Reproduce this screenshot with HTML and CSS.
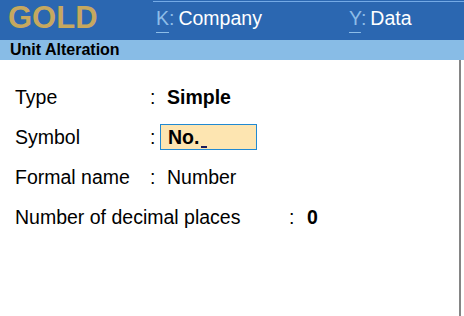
FILE: index.html
```html
<!DOCTYPE html>
<html lang="en">
  <head>
    <meta charset="UTF-8" />
    <meta name="viewport" content="width=device-width, initial-scale=1.0" />
    <title>Unit Alteration</title>
    <link rel="stylesheet" href="styles.css">
  </head>

  <body>
    <div class="topbar">
      <div class="brand">GOLD</div>
      <div class="menu">
        <div class="menu-item company"><span class="key"><u>K</u>:</span>Company</div>
        <div class="menu-item"><span class="key"><u>Y</u>:</span>Data</div>
      </div>
    </div>

    <div class="subbar">Unit Alteration</div>

    <div class="content">
      <div class="row">
        <div class="label">Type</div>
        <div class="colon">:</div>
        <div class="value bold">Simple</div>
      </div>
      <div class="row">
        <div class="label">Symbol</div>
        <div class="colon">:</div>
        <div class="field">No.<span class="cursor"></span></div>
      </div>
      <div class="row">
        <div class="label">Formal name</div>
        <div class="colon">:</div>
        <div class="value">Number</div>
      </div>
      <div class="row wide">
        <div class="label">Number of decimal places</div>
        <div class="colon">:</div>
        <div class="value bold">0</div>
      </div>
    </div>
  </body>
</html>
```

FILE: styles.css
```css
body {
  margin: 0;
  font-family: "Liberation Sans", Arial, sans-serif;
  color: #000;
  background: #fff;
  height: 316px;
  overflow: hidden;
}

.topbar {
  display: flex;
  height: 40px;
  background-color: #2b67b1;
}

.brand {
  width: 145px;
  padding-left: 8px;
  font-size: 31px;
  font-weight: bold;
  line-height: 36px;
  color: #c6a85f;
}

.menu {
  flex: 1;
  display: flex;
  margin-top: 1px;
  border-top: 1px solid #74aae6;
  padding-left: 3px;
}

.menu-item {
  font-size: 19.5px;
  line-height: 32px;
  color: #fff;
}

.company {
  width: 193px;
}

.key {
  color: #8dbde8;
  margin-right: 4px;
}

.key u {
  text-decoration: underline;
  text-underline-offset: 7px;
  text-decoration-thickness: 1px;
}

.subbar {
  height: 20px;
  line-height: 20px;
  background-color: #88bce6;
  padding-left: 10px;
  font-size: 16px;
  font-weight: bold;
}

.content {
  width: 461px;
  height: 256px;
  border-right: 2px solid #858585;
  padding-top: 17px;
  box-sizing: border-box;
}

.row {
  display: flex;
  align-items: center;
  height: 40px;
  font-size: 19.5px;
}

.label {
  width: 135px;
  padding-left: 15px;
}

.wide .label {
  width: 274px;
}

.colon {
  width: 10px;
}

.value {
  padding-left: 7px;
}

.wide .value {
  padding-left: 8px;
}

.bold {
  font-weight: bold;
}

.field {
  width: 97px;
  height: 26px;
  box-sizing: border-box;
  border: 1px solid #2189d2;
  background-color: #fde5b1;
  padding-left: 7px;
  font-weight: bold;
  line-height: 24px;
}

.cursor {
  display: inline-block;
  width: 6px;
  height: 2px;
  margin-left: 2px;
  vertical-align: -4px;
  background-color: #1c1c5c;
}
```
